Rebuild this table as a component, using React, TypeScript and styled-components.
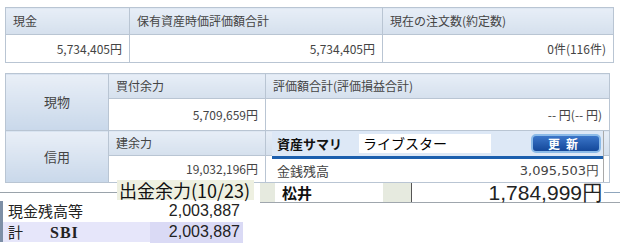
import styled, { createGlobalStyle } from 'styled-components'

const GlobalStyle = createGlobalStyle`
  html, body {
    margin: 0;
    padding: 0;
    background: #fff;
  }
  body {
    font-family: 'Noto Sans CJK JP', 'DejaVu Sans', sans-serif;
    color: #333;
  }
`

const Page = styled.div`
  position: relative;
  width: 620px;
  height: 252px;
  overflow: hidden;
  padding: 7px 0 0 5px;
  box-sizing: border-box;
`

const Table = styled.table<{ $width: number; $gap?: number }>`
  width: ${(p) => p.$width}px;
  border-collapse: collapse;
  table-layout: fixed;
  margin-top: ${(p) => p.$gap ?? 0}px;
  font-size: 12px;
  line-height: 14px;

  td,
  th {
    border: 1px solid #b9c5d3;
    padding: 0 7px;
    font-weight: normal;
    color: #444;
  }
`

const Head = styled.th<{ $h: number }>`
  height: ${(p) => p.$h}px;
  text-align: left;
  background: linear-gradient(#e7eef7, #d5e0ed);
`

const Value = styled.td<{ $h: number }>`
  height: ${(p) => p.$h}px;
  text-align: right;
  background: #fff;
`

const Label = styled.th`
  text-align: center;
  font-size: 13px;
  background: linear-gradient(#e9eff7, #c9d8ea);
`

const Summary = styled.div`
  position: absolute;
  left: 272px;
  top: 131px;
  width: 331px;
  border-right: 1px solid #a9a9a9;
  background: #fff;
`

const SummaryBar = styled.div`
  display: flex;
  align-items: center;
  height: 25px;
  padding: 0 2px 0 5px;
  background: #dde8f6;
  border-bottom: 3px solid #1b5fae;
`

const SummaryTitle = styled.span`
  width: 82px;
  font-size: 13px;
  font-weight: bold;
  color: #111;
`

const Broker = styled.span`
  width: 128px;
  height: 19px;
  padding-left: 4px;
  background: #fff;
  font-size: 14px;
  line-height: 19px;
  color: #000;
`

const RefreshButton = styled.button`
  margin-left: auto;
  width: 70px;
  height: 19px;
  padding: 0;
  border: 2px solid #8cbbe8;
  border-radius: 5px;
  background: linear-gradient(#3b76c9, #14489a);
  color: #fff;
  font-family: inherit;
  font-size: 12px;
  font-weight: bold;
  letter-spacing: 6px;
  line-height: 14px;
`

const BalanceRow = styled.div`
  display: flex;
  justify-content: space-between;
  align-items: center;
  height: 23px;
  padding: 0 4px 0 5px;
  font-size: 13px;
  color: #444;

  b {
    font-family: 'DejaVu Sans', sans-serif;
    font-weight: normal;
    font-size: 13px;
  }
`

const MatsuiRow = styled.div`
  position: absolute;
  left: 260px;
  top: 183px;
  width: 360px;
  height: 19px;
  display: flex;
  align-items: stretch;
  border-bottom: 1px solid #9fa6ad;
  background: #fff;
`

const MatsuiSide = styled.div<{ $w: number; $rule?: boolean }>`
  width: ${(p) => p.$w}px;
  background: #e6eadf;
  border-right: ${(p) => (p.$rule ? '1px solid #555' : 'none')};
`

const MatsuiName = styled.div`
  width: 101px;
  padding-left: 7px;
  background: #fff;
  font-size: 15px;
  font-weight: bold;
  line-height: 19px;
  color: #111;
`

const MatsuiAmount = styled.div`
  flex: 1;
  display: flex;
  align-items: center;
  justify-content: flex-end;
  font-family: 'Liberation Sans', sans-serif;
  font-size: 21px;
  color: #222;

  &::after {
    content: '';
    width: 16px;
    margin-left: 1px;
    border-top: 1px solid #8fa6bd;
  }
`

const Withdraw = styled.div`
  position: absolute;
  z-index: 2;
  left: 0;
  top: 180px;
  display: flex;
  align-items: flex-end;
  height: 20px;

  &::before {
    content: '';
    width: 117px;
    margin-bottom: 7px;
    border-top: 1px solid #9aa3ab;
  }
`

const WithdrawLabel = styled.span`
  padding: 0 4px 0 2px;
  background: #eef0e1;
  font-size: 18px;
  line-height: 20px;
  color: #111;
`

const CashBox = styled.div`
  position: absolute;
  left: 0;
  top: 201px;
  width: 240px;
  background: #fff;
  border-left: 3px solid #7d8fa6;
  font-size: 15px;
  color: #222;
`

const CashRow = styled.div<{ $total?: boolean }>`
  display: grid;
  grid-template-columns: 147px 1fr;
  height: 20px;
  margin-top: ${(p) => (p.$total ? 1 : 0)}px;
  background: ${(p) => (p.$total ? '#e6e6fa' : '#fff')};
  line-height: 20px;
`

const CashName = styled.span`
  padding-left: 5px;
  white-space: nowrap;

  em {
    margin-left: 27px;
    font-family: 'Liberation Serif', serif;
    font-style: normal;
    font-weight: bold;
    font-size: 16px;
    letter-spacing: 1px;
  }
`

const CashAmount = styled.span<{ $total?: boolean }>`
  padding-right: 3px;
  text-align: right;
  font-family: 'Liberation Sans', sans-serif;
  font-size: 16px;
  background: ${(p) => (p.$total ? '#dadaf5' : 'transparent')};
`

export default function App() {
  return (
    <Page>
      <GlobalStyle />
      <Table $width={609}>
        <colgroup>
          <col style={{ width: 124 }} />
          <col style={{ width: 253 }} />
          <col />
        </colgroup>
        <tbody>
          <tr>
            <Head $h={26}>現金</Head>
            <Head $h={26}>保有資産時価評価額合計</Head>
            <Head $h={26}>現在の注文数(約定数)</Head>
          </tr>
          <tr>
            <Value $h={27}>5,734,405円</Value>
            <Value $h={27}>5,734,405円</Value>
            <Value $h={27}>0件(116件)</Value>
          </tr>
        </tbody>
      </Table>

      <Table $width={605} $gap={10}>
        <colgroup>
          <col style={{ width: 103 }} />
          <col style={{ width: 157 }} />
          <col />
        </colgroup>
        <tbody>
          <tr>
            <Label rowSpan={2}>現物</Label>
            <Head $h={24}>買付余力</Head>
            <Head $h={24}>評価額合計(評価損益合計)</Head>
          </tr>
          <tr>
            <Value $h={31}>5,709,659円</Value>
            <Value $h={31}>-- 円(-- 円)</Value>
          </tr>
          <tr>
            <Label rowSpan={2}>信用</Label>
            <Head $h={24}>建余力</Head>
            <Head $h={24}></Head>
          </tr>
          <tr>
            <Value $h={26}>19,032,196円</Value>
            <Value $h={26}></Value>
          </tr>
        </tbody>
      </Table>

      <Summary>
        <SummaryBar>
          <SummaryTitle>資産サマリ</SummaryTitle>
          <Broker>ライブスター</Broker>
          <RefreshButton>更新</RefreshButton>
        </SummaryBar>
        <BalanceRow>
          <span>金銭残高</span>
          <b>3,095,503円</b>
        </BalanceRow>
      </Summary>

      <MatsuiRow>
        <MatsuiSide $w={15} />
        <MatsuiName>松井</MatsuiName>
        <MatsuiSide $w={28} $rule />
        <MatsuiAmount>1,784,999円</MatsuiAmount>
      </MatsuiRow>

      <Withdraw>
        <WithdrawLabel>出金余力(10/23)</WithdrawLabel>
      </Withdraw>

      <CashBox>
        <CashRow>
          <CashName>現金残高等</CashName>
          <CashAmount>2,003,887</CashAmount>
        </CashRow>
        <CashRow $total>
          <CashName>
            計<em>SBI</em>
          </CashName>
          <CashAmount $total>2,003,887</CashAmount>
        </CashRow>
      </CashBox>
    </Page>
  )
}
